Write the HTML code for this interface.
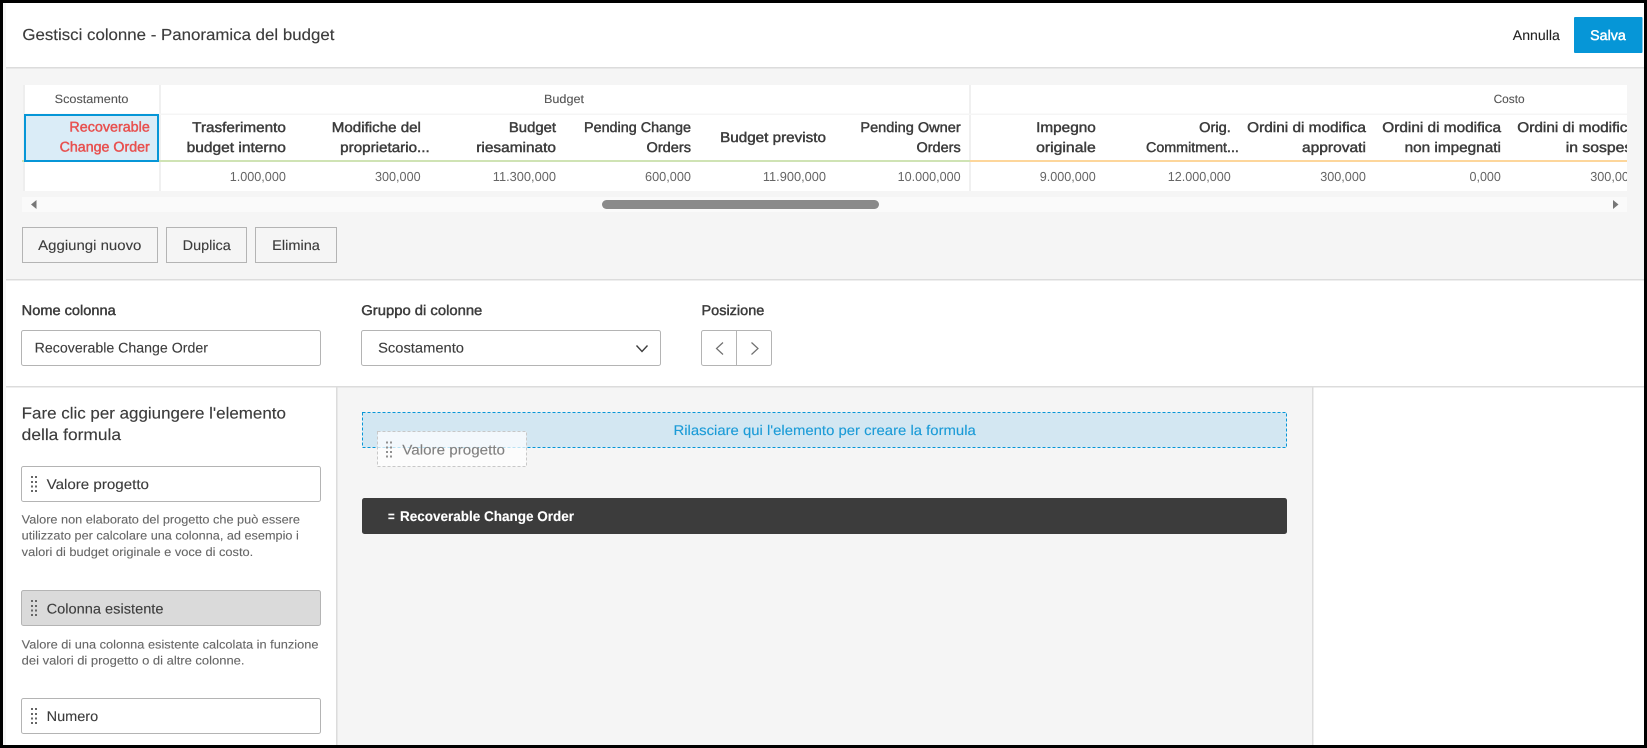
<!DOCTYPE html>
<html lang="it"><head><meta charset="utf-8"><title>Gestisci colonne</title>
<style>
html,body{margin:0;padding:0;background:#000;width:1647px;height:748px;overflow:hidden}
svg{display:block}
text{font-family:"Liberation Sans",Arial,sans-serif;font-size:14px;fill:#3c3c3c;stroke:#3c3c3c;stroke-width:.12;text-rendering:geometricPrecision}
.h{font-size:14px;fill:#3c3c3c;stroke:#3c3c3c;stroke-width:.45}
.v{font-size:13px;fill:#666;stroke:none}
.g{font-size:12px;fill:#555;stroke:#555;stroke-width:.1}
.d{font-size:12px;fill:#666;stroke:#666;stroke-width:.1}
.l{font-size:14px;fill:#3c3c3c;stroke:#3c3c3c;stroke-width:.45}
.r{font-size:14px;fill:#e8504f;stroke:#e8504f;stroke-width:.45}
.t{font-size:16px;stroke-width:.15}
</style></head><body>
<svg xmlns="http://www.w3.org/2000/svg" width="1647" height="748" viewBox="0 0 1647 748">
<defs><clipPath id="c"><rect x="22" y="85" width="1605" height="110"/></clipPath></defs>
<rect width="1647" height="748" fill="#000"/>
<rect x="3" y="3" width="1641" height="742" fill="#f7f7f7"/>
<rect x="6" y="3" width="1638" height="64" fill="#fff"/>
<rect x="6" y="67" width="1638" height="1.5" fill="#dcdcdc"/>
<rect x="6" y="68.5" width="1638" height="210.5" fill="#f5f5f5"/>
<rect x="6" y="279" width="1638" height="1.5" fill="#dcdcdc"/>
<rect x="6" y="280.5" width="1638" height="106" fill="#fff"/>
<rect x="6" y="386" width="1638" height="1.5" fill="#dcdcdc"/>
<rect x="6" y="387.5" width="330" height="357.5" fill="#fff"/>
<rect x="336" y="387.5" width="1.5" height="357.5" fill="#dcdcdc"/>
<rect x="337.5" y="387.5" width="974.5" height="357.5" fill="#f5f5f5"/>
<rect x="1312" y="387.5" width="1.5" height="357.5" fill="#dcdcdc"/>
<rect x="1313.5" y="387.5" width="330.5" height="357.5" fill="#fff"/>

<text class="t" x="22.4" y="40" textLength="312" lengthAdjust="spacingAndGlyphs">Gestisci colonne - Panoramica del budget</text>
<text x="1512.8" y="40" textLength="47" lengthAdjust="spacingAndGlyphs" style="fill:#222">Annulla</text>
<rect x="1574" y="17" width="68.5" height="36" fill="#0696d7" rx="1"/>
<text x="1590.2" y="40" textLength="35.6" lengthAdjust="spacingAndGlyphs" style="fill:#fff;stroke:#fff;stroke-width:.45">Salva</text>

<rect x="22" y="85" width="1605" height="106" fill="#fff"/>
<rect x="22" y="85" width="1" height="106" fill="#f5f5f5"/>
<rect x="23" y="85" width="2" height="106" fill="#eee"/>
<rect x="159" y="85" width="2" height="106" fill="#f0f0f0"/>
<rect x="969" y="85" width="2" height="106" fill="#f0f0f0"/>
<rect x="25" y="113.5" width="1602" height="1.5" fill="#f5f5f5"/>
<rect x="22" y="160" width="948" height="2" fill="#cfe3b4"/>
<rect x="970" y="160" width="657" height="2" fill="#fdd69b"/>
<rect x="25" y="115" width="133" height="46" fill="#daecf7" stroke="#0696d7" stroke-width="2"/>

<text class="g" x="54.7" y="103" textLength="73.7" lengthAdjust="spacingAndGlyphs">Scostamento</text>
<text class="g" x="544" y="103" textLength="40" lengthAdjust="spacingAndGlyphs">Budget</text>
<text class="g" x="1493.6" y="103" textLength="31" lengthAdjust="spacingAndGlyphs">Costo</text>

<text class="r" x="69.4" y="131.3" textLength="80.4" lengthAdjust="spacingAndGlyphs">Recoverable</text>
<text class="r" x="59.6" y="151.3" textLength="90.2" lengthAdjust="spacingAndGlyphs">Change Order</text>

<g clip-path="url(#c)">
<text class="h" x="192.2" y="132" textLength="93.7" lengthAdjust="spacingAndGlyphs">Trasferimento</text>
<text class="h" x="186.6" y="152" textLength="99.3" lengthAdjust="spacingAndGlyphs">budget interno</text>
<text class="h" x="331.8" y="132" textLength="89.1" lengthAdjust="spacingAndGlyphs">Modifiche del</text>
<text class="h" x="340.2" y="152" textLength="89.5" lengthAdjust="spacingAndGlyphs">proprietario...</text>
<text class="h" x="508.9" y="132" textLength="47.1" lengthAdjust="spacingAndGlyphs">Budget</text>
<text class="h" x="476.3" y="152" textLength="79.7" lengthAdjust="spacingAndGlyphs">riesaminato</text>
<text class="h" x="584" y="132" textLength="107" lengthAdjust="spacingAndGlyphs">Pending Change</text>
<text class="h" x="646.5" y="152" textLength="44.5" lengthAdjust="spacingAndGlyphs">Orders</text>
<text class="h" x="720.1" y="142" textLength="105.9" lengthAdjust="spacingAndGlyphs">Budget previsto</text>
<text class="h" x="860.4" y="132" textLength="100.3" lengthAdjust="spacingAndGlyphs">Pending Owner</text>
<text class="h" x="916.5" y="152" textLength="44.2" lengthAdjust="spacingAndGlyphs">Orders</text>
<text class="h" x="1036.1" y="132" textLength="59.7" lengthAdjust="spacingAndGlyphs">Impegno</text>
<text class="h" x="1036.1" y="152" textLength="59.7" lengthAdjust="spacingAndGlyphs">originale</text>
<text class="h" x="1199.1" y="132" textLength="31.7" lengthAdjust="spacingAndGlyphs">Orig.</text>
<text class="h" x="1146" y="152" textLength="92.9" lengthAdjust="spacingAndGlyphs">Commitment...</text>
<text class="h" x="1247.2" y="132" textLength="118.7" lengthAdjust="spacingAndGlyphs">Ordini di modifica</text>
<text class="h" x="1302" y="152" textLength="63.9" lengthAdjust="spacingAndGlyphs">approvati</text>
<text class="h" x="1382.3" y="132" textLength="118.7" lengthAdjust="spacingAndGlyphs">Ordini di modifica</text>
<text class="h" x="1404.6" y="152" textLength="96.3" lengthAdjust="spacingAndGlyphs">non impegnati</text>
<text class="h" x="1517.3" y="132" textLength="118.7" lengthAdjust="spacingAndGlyphs">Ordini di modifica</text>
<text class="h" x="1565.8" y="152" textLength="70" lengthAdjust="spacingAndGlyphs">in sospesi</text>

<text class="v" x="229.7" y="181" textLength="56.2" lengthAdjust="spacingAndGlyphs">1.000,000</text>
<text class="v" x="375" y="181" textLength="45.6" lengthAdjust="spacingAndGlyphs">300,000</text>
<text class="v" x="492.8" y="181" textLength="63.2" lengthAdjust="spacingAndGlyphs">11.300,000</text>
<text class="v" x="645" y="181" textLength="46" lengthAdjust="spacingAndGlyphs">600,000</text>
<text class="v" x="762.9" y="181" textLength="63.1" lengthAdjust="spacingAndGlyphs">11.900,000</text>
<text class="v" x="897.6" y="181" textLength="63.1" lengthAdjust="spacingAndGlyphs">10.000,000</text>
<text class="v" x="1039.7" y="181" textLength="56.1" lengthAdjust="spacingAndGlyphs">9.000,000</text>
<text class="v" x="1167.7" y="181" textLength="63.1" lengthAdjust="spacingAndGlyphs">12.000,000</text>
<text class="v" x="1320.2" y="181" textLength="45.7" lengthAdjust="spacingAndGlyphs">300,000</text>
<text class="v" x="1469.5" y="181" textLength="31.4" lengthAdjust="spacingAndGlyphs">0,000</text>
<text class="v" x="1590.2" y="181" textLength="45.8" lengthAdjust="spacingAndGlyphs">300,000</text>
</g>

<rect x="22" y="197" width="1605" height="15" fill="#fafafa"/>
<rect x="602" y="200" width="277" height="9" rx="4.5" fill="#8a8a8a"/>
<path d="M36.5 200v9l-5.500-4.500z" fill="#777"/>
<path d="M1613 200v9l5.500-4.500z" fill="#777"/>

<g fill="#f5f5f5" stroke="#b4b4b4" stroke-width="1">
<rect x="22.5" y="227.5" width="135" height="35"/>
<rect x="166.5" y="227.5" width="80" height="35"/>
<rect x="255.5" y="227.5" width="81" height="35"/>
</g>
<text x="38.2" y="250" textLength="103.2" lengthAdjust="spacingAndGlyphs">Aggiungi nuovo</text>
<text x="182.7" y="250" textLength="48.1" lengthAdjust="spacingAndGlyphs">Duplica</text>
<text x="272.2" y="250" textLength="47.7" lengthAdjust="spacingAndGlyphs">Elimina</text>

<text class="l" x="21.7" y="315" textLength="94" lengthAdjust="spacingAndGlyphs">Nome colonna</text>
<text class="l" x="361.3" y="315" textLength="121" lengthAdjust="spacingAndGlyphs">Gruppo di colonne</text>
<text class="l" x="701.5" y="315" textLength="62.8" lengthAdjust="spacingAndGlyphs">Posizione</text>

<g fill="#fff" stroke="#b4b4b4" stroke-width="1">
<rect x="21.5" y="330.5" width="299" height="35" rx="2"/>
<rect x="361.5" y="330.5" width="299" height="35" rx="2"/>
<rect x="701.5" y="330.5" width="70" height="35" rx="2"/>
<path d="M736.5 330.5v35" fill="none"/>
</g>
<text x="34.7" y="352.7" textLength="173.3" lengthAdjust="spacingAndGlyphs">Recoverable Change Order</text>
<text x="378.1" y="352.7" textLength="85.9" lengthAdjust="spacingAndGlyphs">Scostamento</text>
<path d="M636.5 345.500l5.500 6 5.500-6" fill="none" stroke="#3c3c3c" stroke-width="1.4"/>
<path d="M723 342.500l-6.500 6 6.500 6M751.500 342.500l6.500 6-6.500 6" fill="none" stroke="#6f6f6f" stroke-width="1.2"/>

<text class="t" x="21.7" y="418.3" textLength="264.2" lengthAdjust="spacingAndGlyphs">Fare clic per aggiungere l'elemento</text>
<text class="t" x="21.7" y="440" textLength="99.3" lengthAdjust="spacingAndGlyphs">della formula</text>

<rect x="21.5" y="466.5" width="299" height="35" rx="2" fill="#fff" stroke="#b4b4b4"/>
<text x="46.6" y="489" textLength="102.4" lengthAdjust="spacingAndGlyphs">Valore progetto</text>
<text class="d" x="21.7" y="523.5" textLength="278.3" lengthAdjust="spacingAndGlyphs">Valore non elaborato del progetto che può essere</text>
<text class="d" x="21.7" y="539.7" textLength="277.1" lengthAdjust="spacingAndGlyphs">utilizzato per calcolare una colonna, ad esempio i</text>
<text class="d" x="21.7" y="555.9" textLength="231.5" lengthAdjust="spacingAndGlyphs">valori di budget originale e voce di costo.</text>

<rect x="21.5" y="590.5" width="299" height="35" rx="2" fill="#dadada" stroke="#b4b4b4"/>
<text x="46.6" y="613.3" textLength="116.9" lengthAdjust="spacingAndGlyphs">Colonna esistente</text>
<text class="d" x="21.7" y="648.3" textLength="296.8" lengthAdjust="spacingAndGlyphs">Valore di una colonna esistente calcolata in funzione</text>
<text class="d" x="21.7" y="664.3" textLength="222.8" lengthAdjust="spacingAndGlyphs">dei valori di progetto o di altre colonne.</text>

<rect x="21.5" y="698.5" width="299" height="35" rx="2" fill="#fff" stroke="#b4b4b4"/>
<text x="46.6" y="721" textLength="51.6" lengthAdjust="spacingAndGlyphs">Numero</text>

<g fill="#666">
<path d="M31 476h2v2h-2zM35 476h2v2h-2zM31 481h2v2h-2zM35 481h2v2h-2zM31 485.500h2v2h-2zM35 485.500h2v2h-2zM31 490h2v2h-2zM35 490h2v2h-2z"/>
<path transform="translate(0 124)" d="M31 476h2v2h-2zM35 476h2v2h-2zM31 481h2v2h-2zM35 481h2v2h-2zM31 485.500h2v2h-2zM35 485.500h2v2h-2zM31 490h2v2h-2zM35 490h2v2h-2z"/>
<path transform="translate(0 232)" d="M31 476h2v2h-2zM35 476h2v2h-2zM31 481h2v2h-2zM35 481h2v2h-2zM31 485.500h2v2h-2zM35 485.500h2v2h-2zM31 490h2v2h-2zM35 490h2v2h-2z"/>
</g>

<rect x="362.5" y="412.5" width="924" height="35" fill="#d3e7f2" stroke="#0696d7" stroke-dasharray="3 2"/>
<text x="673.5" y="435" textLength="302.3" lengthAdjust="spacingAndGlyphs" style="fill:#1b9bd7;stroke:#1b9bd7">Rilasciare qui l'elemento per creare la formula</text>

<rect x="377.5" y="431.5" width="149" height="35" fill="#fff" fill-opacity=".72" stroke="#c8c8c8" stroke-dasharray="3 2"/>
<path fill="#909090" transform="translate(355 -34.500)" d="M31 476h2v2h-2zM35 476h2v2h-2zM31 481h2v2h-2zM35 481h2v2h-2zM31 485.500h2v2h-2zM35 485.500h2v2h-2zM31 490h2v2h-2zM35 490h2v2h-2z"/>
<text x="402.3" y="454.3" textLength="102.7" lengthAdjust="spacingAndGlyphs" style="fill:#808080;stroke:#808080">Valore progetto</text>

<rect x="362" y="498" width="925" height="36" rx="2.500" fill="#3c3c3c"/>
<text x="388" y="521" textLength="6.700" lengthAdjust="spacingAndGlyphs" style="fill:#fff;stroke:#fff;font-weight:bold">=</text>
<text x="400" y="521" textLength="174" lengthAdjust="spacingAndGlyphs" style="fill:#fff;stroke:#fff;font-weight:bold">Recoverable Change Order</text>
</svg>
</body></html>
